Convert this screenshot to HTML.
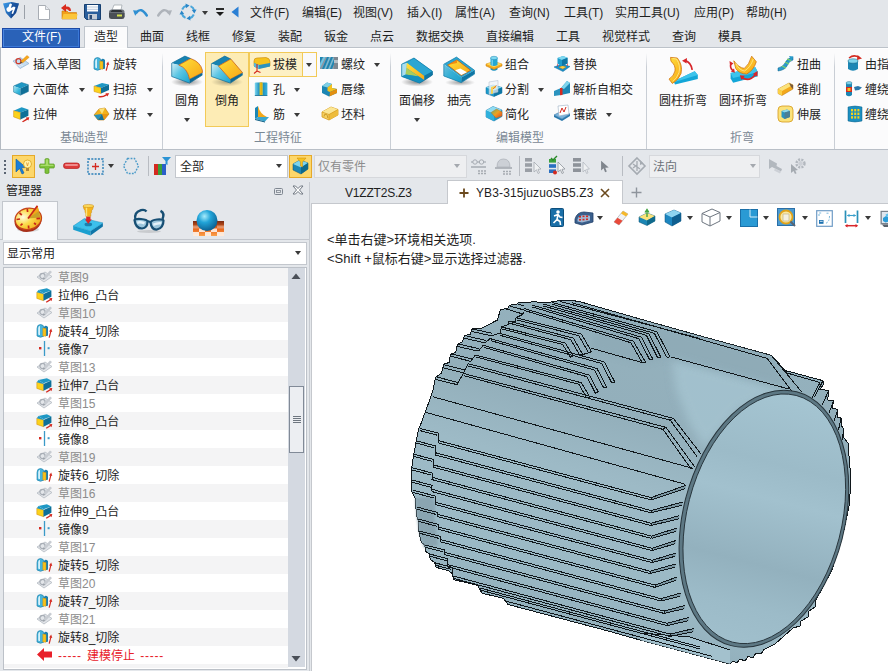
<!DOCTYPE html>
<html lang="zh-CN">
<head>
<meta charset="utf-8">
<title>ZW3D</title>
<style>
html,body{margin:0;padding:0;}
body{width:888px;height:671px;overflow:hidden;position:relative;background:#e4e7eb;
 font-family:"Liberation Sans","Noto Sans CJK SC",sans-serif;font-size:12px;color:#1a1a1a;}
.a{position:absolute;}
.t{position:absolute;white-space:nowrap;font-size:12px;line-height:16px;height:16px;color:#1e1e1e;}
.g{color:#7a8894;}
.dis{color:#8c8c8c;}
.arr{position:absolute;width:0;height:0;border-left:3px solid transparent;border-right:3px solid transparent;border-top:4px solid #3a3a3a;}
.sep{position:absolute;width:1px;background:linear-gradient(to bottom,rgba(201,206,213,0) 0,#c9ced5 14px,#c9ced5 100%);}
svg{position:absolute;overflow:visible;}
/* title bar */
#title{left:0;top:0;width:888px;height:26px;background:#e3e6ea;}
#tabs{left:0;top:26px;width:888px;height:22px;background:#e3e6ea;}
#ribbon{left:0;top:47px;width:888px;height:103px;background:#fbfbfc;box-shadow:inset 0 1px 0 #fff;border-top:1px solid #bcc2c9;border-left:1px solid #b4bac2;border-bottom:1px solid #b9bfc7;box-sizing:border-box;}
#seltb{left:0;top:150px;width:888px;height:32px;background:#e4e7eb;}
#mgr{left:0;top:182px;width:311px;height:489px;background:#e4e7eb;}
#view{left:311px;top:203px;width:577px;height:468px;background:#fff;border-left:1px solid #c5c8cd;border-top:1px solid #c5c8cd;box-sizing:border-box;}
.row{position:absolute;left:4px;width:284px;height:18px;}
.row.o{background:#f4f4f5;}
.row.e{background:#fff;}
.row .t{left:54px;top:2px;}
</style>
</head>
<body>
<div id="title" class="a"></div>
<div id="tabs" class="a"></div>
<div id="ribbon" class="a"></div>
<div id="seltb" class="a"></div>
<div id="mgr" class="a"></div>
<div id="view" class="a"></div>

<!-- ===== title icons ===== -->
<svg style="left:2px;top:1px" width="18" height="18" viewBox="0 0 18 18">
 <defs><linearGradient id="ap" x1="0" y1="0" x2="1" y2="1"><stop offset="0" stop-color="#3a9ae8"/><stop offset="1" stop-color="#123f8c"/></linearGradient></defs>
 <path d="M1 2.500 L9 1 L17 2.500 L14 12 L9 17.500 L4 12Z" fill="url(#ap)"/>
 <path d="M9 1 L17 2.500 L14 12 L9 17.500Z" fill="#0e3478" opacity=".45"/>
 <path d="M4.500 9 Q4 6.500 6.500 6 L7.500 3 Q9 1.800 10 3.500 L8.800 7 L12 5.500 L13.500 6.500 L11 13 L9.500 12.500 L10.800 8.800 L7 11 Q5 11 4.500 9Z" fill="#fff"/>
</svg>
<div class="a" style="left:24px;top:5px;width:1px;height:14px;background:#9aa0a8;"></div>
<svg style="left:38px;top:5px" width="12" height="15" viewBox="0 0 12 15">
 <path d="M.5 .5 L7.5 .5 L11.5 4.5 L11.5 14.5 L.5 14.5Z" fill="#fff" stroke="#a8adb4" stroke-width="1"/>
 <path d="M7.5 .5 L7.5 4.5 L11.5 4.5" fill="#e6e9ee" stroke="#a8adb4" stroke-width=".8"/>
</svg>
<svg style="left:60px;top:3px" width="18" height="17" viewBox="0 0 18 17">
 <path d="M2 8 L7 8 L8.5 9.5 L16.5 9.5 L16.5 16 L2 16Z" fill="#f2a01a" stroke="#c8780a" stroke-width=".6"/>
 <path d="M3.5 11 L17.5 11 L16.5 16 L2 16Z" fill="#fbc63a"/>
 <path d="M11 8 Q11 3 6 3.5 L6 1 L1 5 L6 9 L6 6.3 Q8.5 6 9 8Z" fill="#d92a1c"/>
</svg>
<svg style="left:84px;top:4px" width="17" height="16" viewBox="0 0 17 16">
 <path d="M.5 .5 L16.5 .5 L16.5 15.5 L2.5 15.5 L.5 13.5Z" fill="#2a5f9c" stroke="#173f70" stroke-width="1"/>
 <rect x="3" y="1" width="11" height="6.5" fill="#fff"/><rect x="3" y="2.5" width="11" height="1" fill="#b8c8dc"/><rect x="3" y="4.8" width="11" height="1" fill="#b8c8dc"/>
 <rect x="4" y="10" width="9" height="5.5" fill="#c4ccd6"/><rect x="5.5" y="11" width="2.5" height="4" fill="#2a4a74"/>
</svg>
<svg style="left:108px;top:4px" width="17" height="16" viewBox="0 0 17 16">
 <path d="M4 6 L6 1 L14 1 L13 6Z" fill="#fff" stroke="#9aa0a8" stroke-width=".7"/>
 <path d="M1 8 Q1 5.5 4 5.5 L14 5.5 Q16.5 5.5 16.5 8 L16.5 13 L1 13Z" fill="#6a7078"/>
 <path d="M1 9 L16.5 9 L16.5 13 Q16.5 15 14 15 L3.5 15 Q1 15 1 13Z" fill="#4a4f56"/>
 <rect x="9" y="10.5" width="5" height="2" fill="#d4e04a"/>
 <path d="M4 6 L13 6 L14.5 8 L2.5 8Z" fill="#2e3238"/>
</svg>
<svg style="left:133px;top:7px" width="15" height="10" viewBox="0 0 15 10">
 <path d="M3.500 5.500 Q8 -.5 13.800 8.500" fill="none" stroke="#2f8fd2" stroke-width="2.400" stroke-linecap="round"/><path d="M0 3.200 L6 3.800 L2.200 8.800Z" fill="#2f8fd2"/>
</svg>
<svg style="left:157px;top:7px" width="15" height="10" viewBox="0 0 15 10">
 <path d="M11.500 5.500 Q7 -.5 1.200 8.500" fill="none" stroke="#aeb3ba" stroke-width="2.400" stroke-linecap="round"/><path d="M15 3.200 L9 3.800 L12.800 8.800Z" fill="#aeb3ba"/>
</svg>
<svg style="left:179px;top:3px" width="18" height="18" viewBox="0 0 18 18">
 <g fill="none" stroke="#4aa6da" stroke-width="2">
 <path d="M3.2 6.5 Q4.5 3.5 7.5 2.8"/><path d="M11.5 3.2 Q14.5 4.5 15.2 7.5"/><path d="M14.8 11.5 Q13.5 14.5 10.5 15.2"/><path d="M6.5 14.8 Q3.5 13.5 2.8 10.5"/></g>
 <g fill="#2a86c8"><path d="M6.5 .5 L10.5 2.6 L7 5.2Z"/><path d="M17.5 6.5 L15.4 10.5 L12.8 7Z"/><path d="M11.5 17.5 L7.5 15.4 L11 12.8Z"/><path d="M.5 11.5 L2.6 7.5 L5.2 11Z"/></g>
</svg>
<div class="arr" style="left:202px;top:11px"></div>
<div class="a" style="left:216px;top:8px;width:8px;height:2px;background:#2a2a2a;"></div>
<div class="arr" style="left:216px;top:12px;border-left-width:4px;border-right-width:4px;border-top-color:#1a1a1a"></div>
<svg style="left:231px;top:6px" width="8" height="12" viewBox="0 0 8 12"><path d="M7.5 .5 L7.5 11.5 L.5 6Z" fill="#2a7fd4"/></svg>

<!-- ===== title menu ===== -->
<div class="t" style="left:250px;top:5px;font-size:12px">文件(F)</div>
<div class="t" style="left:302px;top:5px;font-size:12px">编辑(E)</div>
<div class="t" style="left:353px;top:5px;font-size:12px">视图(V)</div>
<div class="t" style="left:407px;top:5px;font-size:12px">插入(I)</div>
<div class="t" style="left:455px;top:5px;font-size:12px">属性(A)</div>
<div class="t" style="left:509px;top:5px;font-size:12px">查询(N)</div>
<div class="t" style="left:564px;top:5px;font-size:12px">工具(T)</div>
<div class="t" style="left:615px;top:5px;font-size:12px">实用工具(U)</div>
<div class="t" style="left:694px;top:5px;font-size:12px">应用(P)</div>
<div class="t" style="left:746px;top:5px;font-size:12px">帮助(H)</div>

<!-- ===== ribbon tabs ===== -->
<div class="a" style="left:2px;top:28px;width:78px;height:20px;background:#2a62b8;border:1px solid #1d4aa5;box-shadow:inset 1px 1px 0 #4a86e0,inset -1px -1px 0 #3a78d8;box-sizing:border-box;"></div>
<div class="t" style="left:22px;top:29px;color:#fff;">文件(F)</div>
<div class="a" style="left:84px;top:26px;width:44px;height:22px;background:#fbfbfc;border:1px solid #bfc5cc;border-bottom:none;box-sizing:border-box;"></div>
<div class="t" style="left:94px;top:29px;">造型</div>
<div class="t" style="left:140px;top:29px;">曲面</div>
<div class="t" style="left:186px;top:29px;">线框</div>
<div class="t" style="left:232px;top:29px;">修复</div>
<div class="t" style="left:278px;top:29px;">装配</div>
<div class="t" style="left:324px;top:29px;">钣金</div>
<div class="t" style="left:370px;top:29px;">点云</div>
<div class="t" style="left:416px;top:29px;">数据交换</div>
<div class="t" style="left:486px;top:29px;">直接编辑</div>
<div class="t" style="left:556px;top:29px;">工具</div>
<div class="t" style="left:602px;top:29px;">视觉样式</div>
<div class="t" style="left:672px;top:29px;">查询</div>
<div class="t" style="left:718px;top:29px;">模具</div>

<!-- ===== ribbon group 1 : 基础造型 ===== -->
<svg style="left:13px;top:55px" width="17" height="16" viewBox="0 0 17 16">
 <path d="M0 6 L7.400 2.500 L16 8.500 L7 13.500Z" fill="#c4dcf0" stroke="#8fb0d0" stroke-width=".7"/>
 <path d="M1.500 8 L8 12 M3 6.500 L10 11" stroke="#e4eef8" stroke-width=".8"/>
 <circle cx="5.500" cy="6.200" r="2.500" fill="none" stroke="#d03a2a" stroke-width="1.300"/>
 <path d="M7.800 6.200 L14 .5 L16.200 2.300 L9.500 8Z" fill="#f8a81a" stroke="#d0780a" stroke-width=".4"/><path d="M7.800 6.200 L9.500 8 L6.800 8.600Z" fill="#5a4a3a"/>
</svg>
<div class="t" style="left:33px;top:57px;">插入草图</div>
<svg style="left:93px;top:55px" width="17" height="17" viewBox="0 0 17 17"><use href="#i-rv"/></svg>
<div class="t" style="left:113px;top:57px;">旋转</div>

<svg style="left:13px;top:81px" width="17" height="16" viewBox="0 0 17 16">
 <defs><linearGradient id="bxl" x1="0" y1="0" x2="1" y2="1"><stop offset="0" stop-color="#b4e8f4"/><stop offset=".6" stop-color="#3cbadc"/><stop offset="1" stop-color="#1c9cc8"/></linearGradient></defs>
 <path d="M.6 5 L8.600 1.500 L15.400 3.700 L7.400 7.400Z" fill="#1f98c4"/>
 <path d="M.6 5 L7.400 7.400 L7.400 14.200 L.6 11.100Z" fill="url(#bxl)"/>
 <path d="M7.400 7.400 L15.400 3.700 L15.400 10.500 L7.400 14.200Z" fill="#0f7098"/>
 <path d="M.6 5 L8.600 1.500 L15.400 3.700 L15.400 10.500 L7.400 14.200 L.6 11.100Z" fill="none" stroke="#0e6a90" stroke-width=".5"/>
</svg>
<div class="t" style="left:33px;top:82px;">六面体</div>
<div class="arr" style="left:79px;top:88px"></div>
<svg style="left:93px;top:81px" width="17" height="17" viewBox="0 0 17 17">
 <path d="M1 5 L9 2 L16 3.500 L8 7Z" fill="#1f98c4"/>
 <path d="M1 5 L8 7 L8 12.500 L1 10.500Z" fill="#fbd21c" stroke="#d08a10" stroke-width=".5"/>
 <path d="M8 7 L16 3.500 L16 9 L8 12.500Z" fill="#0f7098"/>
 <path d="M5.500 14.800 Q9 15.800 13 13.200 L12.400 12.200 L16.200 12.200 L14.400 15.600 L13.800 14.500 Q9.500 17.200 5.500 16.200Z" fill="#d42a20"/>
</svg>
<div class="t" style="left:113px;top:82px;">扫掠</div>
<div class="arr" style="left:147px;top:88px"></div>

<svg style="left:13px;top:106px" width="17" height="17" viewBox="0 0 17 17">
 <path d="M.6 4.700 L8.600 1.200 L15.400 3.500 L7.400 6.600Z" fill="#1f98c4"/>
 <path d="M.6 4.700 L7.400 6.600 L7.400 13.400 L.6 10.900Z" fill="#fbd21c" stroke="#d08a10" stroke-width=".5"/>
 <path d="M7.400 6.600 L15.400 3.500 L15.400 9.700 L7.400 13.400Z" fill="#0f7098"/>
 <path d="M9 15.400 L13.500 12.600 L12.800 11.600 L16.300 11.200 L15.400 14.600 L14.500 13.700 L10 16.300Z" fill="#d42a20"/>
</svg>
<div class="t" style="left:33px;top:107px;">拉伸</div>
<svg style="left:93px;top:106px" width="17" height="16" viewBox="0 0 17 16">
 <path d="M1 9 L6 3 L12 2 L16 8 L11 14 L5 14 Z" fill="#f3b21a" stroke="#b9770c" stroke-width=".6"/>
 <path d="M6 3 L9 8 L12 2 Z" fill="#fbe27a"/><path d="M9 8 L16 8 L11 14Z" fill="#e89512"/>
 <path d="M1 9 L9 8 L5 14Z" fill="#2590bd"/><path d="M9 8 L11 14 L5 14Z" fill="#166f96"/>
</svg>
<div class="t" style="left:113px;top:107px;">放样</div>
<div class="arr" style="left:147px;top:113px"></div>
<div class="t g" style="left:60px;top:130px;">基础造型</div>
<div class="sep" style="left:162px;top:53px;height:96px"></div>

<!-- ===== ribbon group 2 : 工程特征 ===== -->
<svg style="left:170px;top:54px" width="34" height="34" viewBox="0 0 34 34">
 <defs><linearGradient id="bl1" x1="0" y1="0" x2="0" y2="1"><stop offset="0" stop-color="#3db4da"/><stop offset="1" stop-color="#0e6c94"/></linearGradient>
 <linearGradient id="yl1" x1="0" y1="0" x2="1" y2="1"><stop offset="0" stop-color="#ffe03a"/><stop offset="1" stop-color="#f7a516"/></linearGradient>
 <linearGradient id="lf1" x1="0" y1="0" x2="1" y2="1"><stop offset="0" stop-color="#d6eef6"/><stop offset=".45" stop-color="#5cc6e4"/><stop offset="1" stop-color="#1aa4d0"/></linearGradient>
 <radialGradient id="sh1" cx=".5" cy=".5" r=".5"><stop offset="0" stop-color="#000" stop-opacity=".45"/><stop offset="1" stop-color="#000" stop-opacity="0"/></radialGradient></defs>
 <ellipse cx="17" cy="28" rx="16" ry="4.500" fill="url(#sh1)"/>
 <path d="M1.700 9.200 L14.900 2.100 L20.600 4.500 L8.800 11.100Z" fill="#1683b2"/>
 <path d="M1.700 9.200 L8.800 11.100 Q17.500 14 19.600 25.300 L19.600 29.100 L1.700 22.500Z" fill="url(#lf1)"/>
 <path d="M8.800 11.100 L20.600 4.500 Q30.500 8 32.400 16.300 L32.400 18.700 L19.600 25.300 Q17.500 14 8.800 11.100Z" fill="url(#yl1)" stroke="#c2520e" stroke-width=".7"/>
 <path d="M19.600 25.300 L32.400 18.700 L32.400 21 L19.600 29.100Z" fill="#0e6a96"/>
 <path d="M1.700 9.200 L14.900 2.100 L20.600 4.500 M1.700 9.200 L1.700 22.500 L19.600 29.100 L32.400 21" fill="none" stroke="#0e6a96" stroke-width=".7"/>
</svg>
<div class="t" style="left:175px;top:93px;">圆角</div>
<div class="arr" style="left:184px;top:118px"></div>

<div class="a" style="left:205px;top:52px;width:44px;height:75px;background:#fdecb5;border:1px solid #f2ca58;box-sizing:border-box;"></div>
<svg style="left:210px;top:54px" width="34" height="34" viewBox="0 0 34 34">
 <ellipse cx="17" cy="28" rx="16" ry="4.500" fill="url(#sh1)" opacity=".7"/>
 <path d="M1.400 9.700 L14.700 2.100 L20.800 5 L8.500 12.100Z" fill="#1683b2"/>
 <path d="M1.400 9.700 L8.500 12.100 L20.300 25.300 L20.300 29.100 L1.400 22.500Z" fill="url(#lf1)"/>
 <path d="M8.500 12.100 L20.800 5 L32.600 18.700 L20.300 25.300Z" fill="url(#yl1)" stroke="#c2520e" stroke-width=".7"/>
 <path d="M20.300 25.300 L32.600 18.700 L32.600 21 L20.300 29.100Z" fill="#0e6a96"/>
 <path d="M1.400 9.700 L14.700 2.100 L20.800 5 M1.400 9.700 L1.400 22.500 L20.300 29.100 L32.600 21" fill="none" stroke="#0e6a96" stroke-width=".7"/>
</svg>
<div class="t" style="left:215px;top:93px;">倒角</div>

<div class="a" style="left:249px;top:52px;width:68px;height:25px;background:#fdf0c4;border:1px solid #f2ca58;box-sizing:border-box;"></div>
<div class="a" style="left:302px;top:53px;width:1px;height:23px;background:#f2ca58;"></div>
<div class="a" style="left:303px;top:53px;width:13px;height:23px;background:#f9f9fb;"></div>
<svg style="left:252px;top:56px" width="19" height="18" viewBox="0 0 19 18">
 <path d="M2 5 Q2 2 5 2 L14 1.5 Q18 2 18 6 L18 10 L7 12 L2 10 Z" fill="#f6c21c" stroke="#c8860c" stroke-width=".6"/>
 <path d="M2 7 L7 9 L18 7 L18 10.5 L7 13 L2 10.5 Z" fill="#2a93bf"/>
 <path d="M7 9 L7 13 L2 10.5 L2 7Z" fill="#56b9dc"/>
 <path d="M5 8 L5 15 M5 15 L2 17.5 M5 15 L8.5 16.5" stroke="#d42a20" stroke-width="1.1" fill="none"/>
</svg>
<div class="t" style="left:273px;top:57px;">拔模</div>
<div class="arr" style="left:306px;top:63px"></div>

<svg style="left:254px;top:81px" width="15" height="16" viewBox="0 0 15 16">
 <defs><linearGradient id="hl" x1="0" y1="0" x2="1" y2="0"><stop offset="0" stop-color="#7fd8f0"/><stop offset=".35" stop-color="#1c90c0"/><stop offset=".65" stop-color="#1c90c0"/><stop offset="1" stop-color="#3cb4dc"/></linearGradient></defs>
 <rect x=".8" y="1.500" width="12.600" height="13" rx="1" fill="url(#hl)"/>
 <rect x="5.600" y="1.500" width="3" height="13" fill="#fbd21c"/><rect x="6.600" y="1.500" width="1" height="13" fill="#d09a10"/>
 <path d="M.8 14.500 L13.400 14.500" stroke="#0e6a90" stroke-width=".8"/>
</svg>
<div class="t" style="left:273px;top:82px;">孔</div>
<div class="arr" style="left:294px;top:88px"></div>
<svg style="left:254px;top:105px" width="16" height="18" viewBox="0 0 16 18">
 <path d="M1 3 L4 1 L4 12 L1 14 Z" fill="#1c86b4"/>
 <path d="M4 1 L4 12 L13 12 Q6 9 4 1Z" fill="#f3a81a"/>
 <path d="M1 14 L4 12 L15 12 L11 16.5 Z" fill="#3aa6cf"/><path d="M1 14 L11 16.5 L11 17.5 L1 15Z" fill="#0f5f84"/>
</svg>
<div class="t" style="left:273px;top:107px;">筋</div>
<div class="arr" style="left:294px;top:113px"></div>

<svg style="left:320px;top:56px" width="18" height="14" viewBox="0 0 18 14">
 <rect x="0" y="1" width="18" height="12" fill="#8a98a6"/>
 <path d="M0 1 L3 1 L0 7Z M2 13 L7 1 L9 1 L4 13Z M6 13 L11 1 L13 1 L8 13Z M10 13 L14 3 L14 8 L12 13Z" fill="#1c86b4"/>
 <path d="M0 8 L3.5 1 L5.5 1 L0 12Z M4.5 13 L9.5 1 L10.5 1 L5.5 13Z M8.5 13 L13 2 L14 2 L9.5 13Z" fill="#6cc7e6"/>
 <rect x="14" y="1" width="4" height="12" fill="#7d8791"/><rect x="14" y="4" width="4" height="3" fill="#b8c0c8"/>
</svg>
<div class="t" style="left:341px;top:57px;">螺纹</div>
<div class="arr" style="left:374px;top:63px"></div>
<svg style="left:321px;top:81px" width="17" height="16" viewBox="0 0 17 16">
 <path d="M1 5 L6 1.5 L11 3 L11 7 L16 8 L16 12 L8 15.5 L1 12 Z" fill="#1c86b4"/>
 <path d="M1 5 L6 1.5 L11 3 L6.5 6.5 Z" fill="#7fd0e6"/>
 <path d="M6.5 6.5 L11 3 L11 7 L16 8 L9 11 L6.5 10Z" fill="#f6c21c"/>
 <path d="M9 11 L16 8 L16 12 L8.5 15.5Z" fill="#e28f10"/>
</svg>
<div class="t" style="left:341px;top:82px;">唇缘</div>
<svg style="left:321px;top:106px" width="18" height="15" viewBox="0 0 18 15">
 <path d="M1 6 L10 1 L17 3.500 L17 9 L8 14 L1 11Z" fill="#f6d060" stroke="#d69a1c" stroke-width=".8"/>
 <path d="M1 6 L10 1 L17 3.500 L8 8.500Z" fill="#fbe694"/>
 <path d="M8 8.500 L17 3.500 L17 9 L8 14Z" fill="#eebc3c"/>
 <path d="M1 6 L8 8.500 L17 3.500 M8 8.500 L8 14" stroke="#d69a1c" stroke-width=".7" fill="none"/>
 <path d="M3 10.500 Q3 7.800 5 8.300 Q6.800 8.800 6.800 12" stroke="#b88412" stroke-width=".7" fill="none"/>
</svg>
<div class="t" style="left:341px;top:107px;">坯料</div>
<div class="t g" style="left:254px;top:130px;">工程特征</div>
<div class="sep" style="left:390px;top:53px;height:96px"></div>

<!-- ===== ribbon group 3 : 编辑模型 ===== -->
<svg style="left:400px;top:54px" width="34" height="34" viewBox="0 0 34 34">
 <ellipse cx="17" cy="28" rx="16" ry="4.500" fill="url(#sh1)"/>
 <path d="M1.700 10.200 L14 4 L32.400 17.300 L32.400 21 L19.600 29.100 L1.700 22.500Z" fill="#1a9cc8"/>
 <path d="M14 4 L32.400 17.300 L24.400 21.800 L7.400 8.800Z" fill="#2ba6d2"/>
 <path d="M1.700 10.200 L7 8.800 L6.400 20.600 L1.700 22.500Z" fill="#a9def0"/>
 <path d="M6.900 8.800 L24.400 22 L24.400 26.300 L6.400 14Z" fill="url(#yl1)"/>
 <path d="M6.400 14 L18.700 22.500 L5.500 20.600Z" fill="#a8cc5c"/>
 <path d="M1.700 22.500 L5.500 20.600 L18.700 22.500 L24.400 26.300 L19.600 29.100Z" fill="#1690be"/>
 <path d="M24.400 21.800 L32.400 17.300 L32.400 21 L24.400 26.300Z" fill="#0f76a4"/>
 <path d="M19.600 29.100 L24.400 26.300 L32.400 21 L32.400 17.300" fill="none" stroke="#0e6a96" stroke-width=".7"/>
 <path d="M1.700 10.200 L14 4 L32.400 17.300 M1.700 10.200 L1.700 22.500 L19.600 29.100" fill="none" stroke="#0e7aa8" stroke-width=".7"/>
</svg>
<div class="t" style="left:399px;top:93px;">面偏移</div>
<div class="arr" style="left:414px;top:118px"></div>
<svg style="left:443px;top:54px" width="34" height="34" viewBox="0 0 34 34">
 <ellipse cx="17" cy="28.500" rx="15" ry="3.500" fill="url(#sh1)" opacity=".8"/>
 <path d="M.8 10.200 L13.500 3.100 L31.500 16.300 L18.300 23.400Z" fill="#2ba6d2"/>
 <path d="M.8 10.200 L18.300 23.400 L18.300 28.600 L.8 22Z" fill="url(#lf1)"/>
 <path d="M.8 10.200 L18.300 23.400 L18.300 28.600 L.8 22Z" fill="#1a9cc8" opacity=".55"/>
 <path d="M18.300 23.400 L31.500 16.300 L31.500 20.100 L18.300 28.600Z" fill="#0f76a4"/>
 <path d="M4.600 11.100 L14 5.900 L27.700 16.300 L18.300 21.500Z" fill="url(#yl1)" stroke="#c2520e" stroke-width=".7"/>
 <path d="M14 5.900 L14 9 L4.600 11.100Z" fill="#f08c10"/>
 <path d="M12.100 16.300 L17.300 14.400 L24 18.200 L18.300 21.100Z" fill="#fff"/>
 <path d="M.8 10.200 L13.500 3.100 L31.500 16.300 L31.500 20.100 L18.300 28.600 L.8 22Z" fill="none" stroke="#0e7aa8" stroke-width=".7"/>
</svg>
<div class="t" style="left:447px;top:93px;">抽壳</div>

<svg style="left:485px;top:55px" width="18" height="17" viewBox="0 0 18 17">
 <path d="M5.500 11 L5.500 14.500 Q9 17 12.500 14.500 L12.500 11Z" fill="#1590c0"/>
 <path d="M1 9 L9 6.500 L17 9 L17 11 L9 14.500 L1 11Z" fill="#f3a81a" stroke="#c8780a" stroke-width=".5"/>
 <path d="M1 9 L9 6.500 L17 9 L9 12.300Z" fill="#fdd65a"/>
 <path d="M5.500 3 L5.500 10 Q9 12 12.500 10 L12.500 3Z" fill="#22a8d4"/>
 <path d="M6.500 3.500 L6.500 10.300 Q7.500 10.800 8 10.800 L8 4Z" fill="#8fdcf2" opacity=".7"/>
 <ellipse cx="9" cy="3" rx="3.500" ry="1.700" fill="#7fd8f0" stroke="#1a86b4" stroke-width=".5"/>
</svg>
<div class="t" style="left:505px;top:57px;">组合</div>
<svg style="left:485px;top:80px" width="18" height="17" viewBox="0 0 18 17">
 <path d="M1 7.500 L8 5 L17 7.500 L17 13 L9 16.500 L1 13.500Z" fill="#1c9ccc" stroke="#0e6a9c" stroke-width=".5"/>
 <path d="M1 7.500 L8 5 L17 7.500 L9 10.500Z" fill="#7fd8f0"/>
 <path d="M9 10.500 L17 7.500 L17 13 L9 16.500Z" fill="#0f76a4"/>
 <path d="M4 2 L13 .5 L13 12 L4 14.500Z" fill="#eef4f9" fill-opacity=".7" stroke="#a8b8c8" stroke-width=".5"/>
 <path d="M6 7 L11 5.500 L11 8 L8 9 L8 13.500 L6 14Z" fill="#fbd045" opacity=".9"/>
 <path d="M8 9 L11.500 5.500" stroke="#e8602a" stroke-width=".8"/>
</svg>
<div class="t" style="left:505px;top:82px;">分割</div>
<div class="arr" style="left:538px;top:88px"></div>
<svg style="left:485px;top:105px" width="18" height="17" viewBox="0 0 18 17">
 <defs><linearGradient id="smp" x1="0" y1="0" x2="1" y2="1"><stop offset="0" stop-color="#58b56a"/><stop offset=".5" stop-color="#f0a020"/><stop offset="1" stop-color="#d8402a"/></linearGradient></defs>
 <path d="M1 5.500 L8 1.500 L17 5 L17 11.500 L9 16 L1 12Z" fill="#1c9ccc" stroke="#0e6a9c" stroke-width=".5"/>
 <path d="M1 5.500 L8 1.500 L17 5 L9 9Z" fill="#8fdcf2"/>
 <path d="M1 5.500 L9 9 L9 16 L1 12Z" fill="#2fb0dc"/>
 <path d="M6 7.600 L11.500 4 L17 7 L17 11 L11 13Z" fill="url(#smp)" stroke="#b8601a" stroke-width=".4"/>
</svg>
<div class="t" style="left:505px;top:107px;">简化</div>

<svg style="left:553px;top:55px" width="18" height="17" viewBox="0 0 18 17">
 <path d="M1 12 L9 9 L17 11.500 L10 16.500Z" fill="#1a90c8" stroke="#0e6a9c" stroke-width=".5"/>
 <path d="M6 12.200 L9.500 10.800 L13 12 L9.800 14Z" fill="#fbd045" stroke="#c8780a" stroke-width=".4"/>
 <path d="M4.500 3 L10 1 L14.500 2.800 L14.500 8.500 L9 11 L4.500 8.800Z" fill="#1c9ccc"/>
 <path d="M4.500 3 L10 1 L14.500 2.800 L9 5Z" fill="#7fd8f0"/><path d="M9 5 L14.500 2.800 L14.500 8.500 L9 11Z" fill="#0f76a4"/>
 <path d="M4.500 8.800 L4.500 11.500 M14.500 8.500 L14.500 11" stroke="#d8262a" stroke-width=".6"/>
</svg>
<div class="t" style="left:573px;top:57px;">替换</div>
<svg style="left:553px;top:80px" width="18" height="17" viewBox="0 0 18 17">
 <path d="M1 11 L8 8 L8 15 L1 16Z" fill="#2a93bf"/>
 <path d="M8 8 L14 1 L17 3 L17 13 L8 15Z" fill="#1c86b4"/>
 <path d="M8 8 L14 1 L17 3 L11 9Z" fill="#7fd4ec"/>
 <path d="M7 8 L9.5 8 L9.5 15 L7 15.3Z" fill="#d42a20"/>
</svg>
<div class="t" style="left:573px;top:82px;">解析自相交</div>
<svg style="left:553px;top:104px" width="18" height="18" viewBox="0 0 18 18">
 <path d="M1 11 L9 7 L17 10 L9 15Z" fill="#7db4dc" stroke="#3a78a8" stroke-width=".6"/>
 <path d="M1 13 L9 17 L17 12 L17 10 L9 15 L1 11Z" fill="#2a78ac"/>
 <path d="M5 2 L15 1 L16 10 L6 12Z" fill="#fff" stroke="#9aaec2" stroke-width=".6"/>
 <path d="M7 9 L9 4 L11 8 L13 3" stroke="#d42a20" stroke-width="1" fill="none"/>
</svg>
<div class="t" style="left:573px;top:107px;">镶嵌</div>
<div class="arr" style="left:606px;top:113px"></div>
<div class="t g" style="left:496px;top:130px;">编辑模型</div>
<div class="sep" style="left:646px;top:53px;height:96px"></div>

<!-- ===== ribbon group 4 : 折弯 ===== -->
<svg style="left:666px;top:55px" width="35" height="30" viewBox="0 0 35 30">
 <path d="M7.600 26.200 L28.700 16.300 L31.800 20 L31.800 24.100 L9 29.500Z" fill="#12a6d8"/>
 <path d="M7.600 26.200 L28.700 16.300 L31.800 20 L9.500 26.800Z" fill="#3cc4ec"/>
 <path d="M4.500 2.400 L11.300 3 Q17 10 15 18.500 Q12.500 25 6.400 28.500 L3 24.100 Q8 21 9 16 Q9.800 10 5 6.400Z" fill="url(#yl1)" stroke="#d2740e" stroke-width=".8"/>
 <path d="M6.500 3.500 L10.500 4 Q14.800 10.500 13 17.500 Q11 23.500 6.600 26.500" fill="none" stroke="#fff0a0" stroke-width="1" opacity=".7"/>
 <path d="M26.200 14.800 Q25 7.500 19.500 5.600" fill="none" stroke="#d8262a" stroke-width="1.700"/><path d="M16 5.800 L21 3 L20.500 8.600Z" fill="#d8262a"/>
</svg>
<div class="t" style="left:659px;top:93px;">圆柱折弯</div>
<svg style="left:727px;top:55px" width="33" height="30" viewBox="0 0 33 30">
 <path d="M3.600 17.900 L28.400 12.300 L30.900 17.300 L30.300 21.600 L6.100 27.800 L3.600 23.500Z" fill="#12a6d8"/>
 <path d="M3.600 17.900 L28.400 12.300 L30.900 17.300 L6 23Z" fill="#3cc4ec"/>
 <path d="M6.800 5.800 Q12 13 17.300 13.400 Q22 10 24.700 1.200 L29.300 6.800 Q26.500 15.500 19.700 19 Q12.500 19 8.800 13.600Z" fill="url(#yl1)" stroke="#d2740e" stroke-width=".8"/>
 <path d="M8.800 8.500 Q12.500 15.500 17.500 16 Q23.500 12.500 26.300 4" fill="none" stroke="#fff0a0" stroke-width="1" opacity=".7"/>
 <path d="M4 9 Q2.500 12.500 5.800 15.500" fill="none" stroke="#d8262a" stroke-width="1.600"/><path d="M2.500 6 L6.500 8.500 L3 11Z" fill="#d8262a"/><path d="M8 17.800 L3.800 16.500 L7 13.500Z" fill="#d8262a"/>
 <path d="M15 22.500 Q22 27.500 28.500 19.500" fill="none" stroke="#d8262a" stroke-width="1.800"/><path d="M12.800 20.300 L17.800 20.800 L14.500 25Z" fill="#d8262a"/><path d="M30.500 16 L30.500 21.500 L25.800 19Z" fill="#d8262a"/>
</svg>
<div class="t" style="left:719px;top:93px;">圆环折弯</div>

<svg style="left:777px;top:55px" width="17" height="17" viewBox="0 0 17 17">
 <path d="M1 13 Q6 12 8 8 Q10 3 16 2 L16 5 Q12 6 10.5 10 Q8.5 15 1 16Z" fill="#2a9ccc" stroke="#0b5f88" stroke-width=".5"/>
 <path d="M5 11 L9 13 M8 7 L12 9 M10 4 L14 5.5" stroke="#7ad06a" stroke-width="1.2"/>
 <path d="M12 1 L16.5 1.5 L14 5Z" fill="#2a9ccc"/>
</svg>
<div class="t" style="left:797px;top:57px;">扭曲</div>
<svg style="left:777px;top:81px" width="17" height="16" viewBox="0 0 17 16">
 <path d="M1 8 L12 2 L16 4 L16 8 L5 14.5 L1 12.5Z" fill="#f3a81a" stroke="#b9770c" stroke-width=".5"/>
 <path d="M1 8 L12 2 L16 4 L5 10Z" fill="#fbe27a"/>
 <path d="M1 8 L5 10 L5 14.5 L1 12.5Z" fill="#fbd045"/>
 <path d="M12 2 L16 4 L16 8 L14 6Z" fill="#7a5a3a"/>
</svg>
<div class="t" style="left:797px;top:82px;">锥削</div>
<svg style="left:777px;top:105px" width="17" height="18" viewBox="0 0 17 18">
 <rect x="1" y="1" width="15" height="16" rx="4" fill="#fbe27a" stroke="#d69a1c" stroke-width=".8"/>
 <path d="M4.5 6 L10 4.5 L13 6 L13 12 L7.5 14 L4.5 12Z" fill="#2a93bf"/>
 <path d="M4.5 6 L10 4.5 L13 6 L7.5 7.5Z" fill="#8fd8ec"/><path d="M7.5 7.5 L13 6 L13 12 L7.5 14Z" fill="#4a7f96"/>
</svg>
<div class="t" style="left:797px;top:107px;">伸展</div>
<div class="t g" style="left:730px;top:130px;">折弯</div>
<div class="sep" style="left:834px;top:53px;height:96px"></div>

<!-- ===== ribbon group 5 ===== -->
<svg style="left:846px;top:54px" width="17" height="18" viewBox="0 0 17 18">
 <path d="M2 7 L2 15 Q7 18.5 12 15 L12 7Z" fill="#1c86b4"/>
 <ellipse cx="7" cy="7" rx="5" ry="2.2" fill="#7fd4ec" stroke="#14607f" stroke-width=".5"/>
 <path d="M3 4 Q8 0 13 3.5" fill="none" stroke="#d42a20" stroke-width="1.5"/><path d="M11.5 1 L16 4.5 L11 6Z" fill="#d42a20"/>
</svg>
<div class="t" style="left:865px;top:57px;">由指定</div>
<svg style="left:845px;top:80px" width="18" height="18" viewBox="0 0 18 18">
 <path d="M1 3 L1 15 Q4 17.5 7 15 L7 3Z" fill="#1c86b4"/><ellipse cx="4" cy="3" rx="3" ry="1.5" fill="#7fd4ec" stroke="#14607f" stroke-width=".4"/>
 <path d="M1 7 L7 7 L7 12 L1 12Z" fill="#d42a20"/><rect x="2.5" y="8" width="3" height="3" fill="#f6c21c"/>
 <path d="M9 7 L13 6 L17 7.5 L14 10 L10 10.5Z" fill="#2a78ac"/>
</svg>
<div class="t" style="left:865px;top:82px;">缠绕到</div>
<svg style="left:847px;top:105px" width="16" height="18" viewBox="0 0 16 18">
 <path d="M1 2 Q8 0 15 2 L15 16 Q8 18 1 16Z" fill="#1c8fc0" stroke="#0b5f88" stroke-width=".5"/>
 <g fill="#f6d21c"><rect x="4" y="4" width="2" height="2.4"/><rect x="7.2" y="4" width="2" height="2.4"/><rect x="10.4" y="4" width="2" height="2.4"/>
 <rect x="4" y="7.6" width="2" height="2.4"/><rect x="7.2" y="7.6" width="2" height="2.4"/><rect x="10.4" y="7.6" width="2" height="2.4"/>
 <rect x="4" y="11.2" width="2" height="2.4"/><rect x="7.2" y="11.2" width="2" height="2.4"/><rect x="10.4" y="11.2" width="2" height="2.4"/></g>
</svg>
<div class="t" style="left:865px;top:107px;">缠绕阵</div>

<!-- ===== selection toolbar ===== -->
<div class="a" style="left:4px;top:160px;width:2px;height:2px;background:#5a6472;box-shadow:0 4px 0 #5a6472,0 8px 0 #5a6472,0 12px 0 #5a6472;"></div>
<div class="a" style="left:12px;top:155px;width:23px;height:23px;background:#fdd76a;border:1px solid #e5a92a;box-sizing:border-box;"></div>
<svg style="left:15px;top:158px" width="18" height="18" viewBox="0 0 18 18">
 <path d="M1 1 L1 14 L4.5 10.5 L7 16 L9 15 L6.5 9.8 L11 9.5Z" fill="#1a7fd8" stroke="#0c5aa8" stroke-width=".6"/>
 <circle cx="12.5" cy="6" r="4" fill="#fff2a8" stroke="#d8a21a" stroke-width=".8"/>
 <rect x="11" y="10" width="3" height="3" fill="#b0883a"/>
 <path d="M11.5 4.5 L12.5 8 L13.5 4.5" stroke="#e08a1a" stroke-width=".7" fill="none"/>
</svg>
<svg style="left:39px;top:158px" width="16" height="16" viewBox="0 0 16 16">
 <path d="M6 1 Q8 0 10 1 L10 6 L15 6 Q16 8 15 10 L10 10 L10 15 Q8 16 6 15 L6 10 L1 10 Q0 8 1 6 L6 6Z" fill="#7cc23a" stroke="#5a9a22" stroke-width=".7"/>
 <path d="M6.8 1.6 L9.2 1.6 L9.2 6.8 L14.4 6.8 L14.4 8 L1.6 8 L1.6 6.8 L6.8 6.8Z" fill="#a8dc6a"/>
</svg>
<svg style="left:63px;top:162px" width="17" height="8" viewBox="0 0 17 8">
 <rect x=".5" y="1" width="16" height="5.5" rx="2.5" fill="#dc3a3a" stroke="#b82020" stroke-width=".7"/><rect x="2" y="2" width="13" height="2" rx="1" fill="#f08a8a"/>
</svg>
<svg style="left:87px;top:158px" width="17" height="17" viewBox="0 0 17 17">
 <rect x="1" y="1" width="15" height="15" fill="none" stroke="#2a7fb8" stroke-width="1.4" stroke-dasharray="2 1.3"/>
 <path d="M8.5 5 L8.5 12 M5 8.5 L12 8.5" stroke="#d42a20" stroke-width="1.3"/>
</svg>
<div class="arr" style="left:108px;top:164px"></div>
<svg style="left:122px;top:157px" width="18" height="18" viewBox="0 0 18 18">
 <path d="M5.5 1.5 L12.5 1.5 L16.5 9 L12.5 16.5 L5.5 16.5 L1.5 9Z" fill="none" stroke="#4a9ac8" stroke-width="1.4" stroke-dasharray="1.8 1.3"/>
</svg>
<div class="a" style="left:148px;top:156px;width:1px;height:20px;background:#b8bcc2;"></div>
<svg style="left:154px;top:156px" width="17" height="19" viewBox="0 0 17 19">
 <rect x="0" y="8" width="4" height="11" fill="#d42a20"/><rect x="4" y="8" width="4" height="11" fill="#3aa03a"/><rect x="8" y="8" width="4" height="11" fill="#2a5fc8"/>
 <path d="M8 1 L17 1 L13.5 5 L13.5 9 L11.5 8 L11.5 5Z" fill="#2a93d4"/>
</svg>
<div class="a" style="left:175px;top:155px;width:113px;height:23px;background:#fff;border:1px solid #c3c7cd;box-sizing:border-box;"></div>
<div class="t" style="left:180px;top:159px;">全部</div>
<div class="arr" style="left:276px;top:164px"></div>
<div class="a" style="left:289px;top:155px;width:23px;height:23px;background:#fdd76a;border:1px solid #e5a92a;box-sizing:border-box;"></div>
<svg style="left:292px;top:157px" width="18" height="18" viewBox="0 0 18 18">
 <path d="M1 7 L8 3 L16 6 L16 12 L9 17 L1 13Z" fill="#1c86b4" stroke="#0b4f70" stroke-width=".5"/>
 <path d="M1 7 L8 3 L16 6 L9 10.5Z" fill="#7fd4ec"/><path d="M9 10.5 L16 6 L16 12 L9 17Z" fill="#0f6a8c"/>
 <path d="M5 1 L14 1 L10.5 5 L10.5 10 L8.5 9 L8.5 5Z" fill="#f6c21c" stroke="#c8860c" stroke-width=".5"/>
</svg>
<div class="a" style="left:314px;top:155px;width:153px;height:23px;background:#eeeff1;border:1px solid #d6d8dc;box-sizing:border-box;"></div>
<div class="t dis" style="left:318px;top:159px;">仅有零件</div>
<div class="arr" style="left:454px;top:164px;border-top-color:#a4a8ae"></div>
<!-- grey icons -->
<svg style="left:470px;top:157px;opacity:.72" width="17" height="18" viewBox="0 0 17 18">
 <path d="M1 5 L16 5" stroke="#8e949c" stroke-width="1.2"/><circle cx="5" cy="5" r="2.2" fill="#e4e7eb" stroke="#8e949c"/><circle cx="11.5" cy="5" r="2.2" fill="#e4e7eb" stroke="#8e949c"/>
 <path d="M1 10 L16 10" stroke="#8e949c" stroke-width="1.5"/><path d="M8 14 L16 14 M8 16.5 L16 16.5" stroke="#8e949c" stroke-width="1.3" stroke-dasharray="2 1"/>
</svg>
<svg style="left:495px;top:157px;opacity:.72" width="17" height="18" viewBox="0 0 17 18">
 <path d="M2 10 Q2 2 8.5 2 Q15 2 15 10Z" fill="#c4c8ce" stroke="#9aa0a8" stroke-width=".8"/>
 <path d="M0 11 L17 11" stroke="#8e949c" stroke-width="1.6"/><path d="M8 14.5 L16 14.5 M8 17 L16 17" stroke="#8e949c" stroke-width="1.3" stroke-dasharray="2 1"/>
</svg>
<div class="a" style="left:519px;top:156px;width:1px;height:20px;background:#b8bcc2;"></div>
<svg style="left:524px;top:157px;opacity:.72" width="18" height="18" viewBox="0 0 18 18">
 <g fill="#7e848c"><rect x="1" y="1" width="7" height="3.6"/><rect x="1" y="6.2" width="7" height="3.6"/><rect x="1" y="11.4" width="7" height="3.6"/></g>
 <path d="M10 5 L10 15 L12.5 12.8 L14 16.5 L15.5 15.8 L14 12.3 L17 12Z" fill="#f4f5f6" stroke="#8e949c" stroke-width=".8"/>
</svg>
<svg style="left:548px;top:156px" width="18" height="19" viewBox="0 0 18 19">
 <rect x="1" y="3" width="7" height="3.6" fill="#3aa03a"/><rect x="1" y="8.2" width="7" height="3.6" fill="#2a6fc0"/><rect x="1" y="13.4" width="7" height="3.6" fill="#2a6fc0"/>
 <path d="M3 2 L5 4 L9 0" stroke="#2a8a2a" stroke-width="1.4" fill="none"/><circle cx="7" cy="16.5" r="2" fill="#d42a20"/>
 <path d="M10 6 L10 16 L12.5 13.8 L14 17.5 L15.5 16.8 L14 13.3 L17 13Z" fill="#f4f5f6" stroke="#8e949c" stroke-width=".8"/>
</svg>
<svg style="left:572px;top:157px;opacity:.72" width="18" height="18" viewBox="0 0 18 18">
 <g fill="#6e747c"><rect x="1" y="1" width="8" height="3.6"/><rect x="1" y="6.2" width="8" height="3.6"/><rect x="1" y="11.4" width="8" height="3.6"/></g>
 <path d="M11 5 L11 15 L13.2 12.8 L14.6 16.5 L16 15.8 L14.6 12.3 L17.4 12Z" fill="#f4f5f6" stroke="#a0a6ae" stroke-width=".8"/>
</svg>
<svg style="left:600px;top:160px;opacity:.85" width="10" height="13" viewBox="0 0 11 15">
 <path d="M1 1 L1 12 L3.8 9.5 L5.6 14 L7.6 13.2 L5.8 8.9 L9.8 8.6Z" fill="#6e747c"/>
</svg>
<div class="a" style="left:622px;top:156px;width:1px;height:20px;background:#b8bcc2;"></div>
<svg style="left:628px;top:157px;opacity:.72" width="18" height="18" viewBox="0 0 18 18">
 <path d="M9 1 L17 9 L9 17 L1 9Z" fill="none" stroke="#8e949c" stroke-width="1.6"/>
 <path d="M9 4 L9 14 M5 7 L12 12 M5 11 L9 8" stroke="#8e949c" stroke-width="1.3"/><path d="M12 3 L15.5 6.5 L12 8Z" fill="#8e949c"/>
</svg>
<div class="a" style="left:649px;top:155px;width:111px;height:23px;background:#eeeff1;border:1px solid #d6d8dc;box-sizing:border-box;"></div>
<div class="t" style="left:653px;top:159px;color:#6c7178">法向</div>
<div class="arr" style="left:750px;top:164px;border-top-color:#a4a8ae"></div>
<svg style="left:768px;top:158px;opacity:.72" width="15" height="16" viewBox="0 0 15 16">
 <path d="M1 1 L1 11 L4 9 L7 10.5 L13 13.5 L14 11 L8.5 8 L9 5.5Z" fill="#a0a6ae"/><path d="M7 10.5 L13 13.5 L12 15.5 L6 12.5Z" fill="#c4c8ce"/>
</svg>
<svg style="left:790px;top:157px;opacity:.72" width="17" height="17" viewBox="0 0 17 17">
 <circle cx="10.5" cy="6.5" r="4" fill="none" stroke="#a0a6ae" stroke-width="2.4" stroke-dasharray="2 1.2"/><circle cx="10.5" cy="6.5" r="2.4" fill="#c4c8ce"/>
 <path d="M1 7 L1 16 L3.5 14 L5 17 L6.6 16.3 L5.2 13.4 L8 13Z" fill="#8e949c"/>
</svg>

<!-- ===== manager panel ===== -->
<svg width="0" height="0" style="position:absolute"><defs>
 <g id="i-sk"><path d="M1 9 L9 4 L16 8.5 L8 14 Z" fill="#e3e6ea" stroke="#b4bac2" stroke-width=".8"/><circle cx="6.5" cy="8" r="2.6" fill="none" stroke="#a8aeb6" stroke-width="1.2"/><path d="M7.5 9.5 L14 2.5 L16 4 L9.5 11 Z" fill="#c8ccd2"/><path d="M7.5 9.5 L9.5 11 L6.8 11.8Z" fill="#9aa0a8"/></g>
 <g id="i-ex"><path d="M2.400 4 L10.900 2.300 L15.400 4.500 L7.500 7.300Z" fill="#1f98c4"/><path d="M.8 6.200 L7.500 7.900 L7.500 14.700 L.8 12.400Z" fill="#fbd21c" stroke="#d08a10" stroke-width=".5"/><path d="M7.500 7.900 L15.400 4.500 L15.400 10.700 L7.500 14.700Z" fill="#0f7098"/><path d="M2.400 4 L.8 6.200 L7.500 7.900 L7.500 7.300Z" fill="#1f98c4"/><path d="M9.800 15.800 L13.800 13.300 L13.200 12.300 L16.300 12 L15.500 15.200 L14.700 14.300 L10.600 16.700Z" fill="#d42a20"/></g>
 <g id="i-rv"><path d="M1 6.500 Q1 2.500 4.500 2.500 Q8 2.500 8 6.500 L8 14 Q4.500 16.500 1 14 Z" fill="#45b4dc" stroke="#1a7aa4" stroke-width=".6"/><path d="M2.200 6 Q2.500 4 4 3.800 L4 13 Q3 13 2.200 12.500Z" fill="#d4f0fa"/><path d="M8 5 Q9.500 2.500 12 5 L12 13.500 Q10 14.500 8 13.500 Z" fill="#1d7fae"/><path d="M6.800 6 L10 6.500 L10 14.200 L6.800 14 Z" fill="#f6c21c" stroke="#c8860c" stroke-width=".4"/><path d="M12.600 15.500 L14.200 9.500 L13 9.500 L15.200 6.500 L16.300 10 L15.300 9.800 L13.800 15.800Z" fill="#d42a20"/></g>
 <g id="i-mi"><path d="M8.5 1 L8.5 16" stroke="#3a9ac8" stroke-width="1.3"/><rect x="3" y="7" width="2.4" height="2.4" fill="#d42a20"/><rect x="11.6" y="7.2" width="2" height="2" fill="#3a9ac8"/></g>
 <g id="i-st"><path d="M1 8.5 L8 2 L8 5.5 L16 5.5 L16 11.5 L8 11.5 L8 15Z" fill="#e8202a"/></g>
</defs></svg>
<div class="t" style="left:6px;top:183px;">管理器</div>
<svg style="left:274px;top:188px" width="9" height="7" viewBox="0 0 9 7"><rect x=".5" y=".5" width="8" height="6" rx="1" fill="none" stroke="#7e8690" stroke-width="1"/><rect x="2.500" y="2.500" width="4" height="2" fill="none" stroke="#7e8690" stroke-width=".8"/></svg>
<svg style="left:292px;top:185px" width="12" height="10" viewBox="0 0 12 10"><path d="M1 1 L3.5 1 L6 3.5 L8.5 1 L11 1 L7.5 5 L11 9 L8.5 9 L6 6.5 L3.5 9 L1 9 L4.5 5Z" fill="#fff" stroke="#6e7680" stroke-width="1"/></svg>
<div class="a" style="left:0;top:239px;width:309px;height:1px;background:#c3c7cd;"></div>
<div class="a" style="left:2px;top:201px;width:56px;height:39px;background:#f8f9fb;border:1px solid #c3c7cd;border-bottom:none;box-sizing:border-box;"></div>
<!-- tab icon 1: history clock -->
<svg style="left:13px;top:205px" width="31" height="28" viewBox="0 0 31 28">
 <defs><radialGradient id="ck" cx=".32" cy=".38" r=".75"><stop offset="0" stop-color="#fffbe0"/><stop offset=".45" stop-color="#fbdc4a"/><stop offset="1" stop-color="#f0a818"/></radialGradient></defs>
 <ellipse cx="15" cy="24.500" rx="11" ry="2.500" fill="#000" opacity=".13"/>
 <ellipse cx="15" cy="15.800" rx="13.600" ry="11" fill="#a8301a" transform="rotate(-12 15 15.800)"/>
 <ellipse cx="15.300" cy="13.800" rx="13.300" ry="10.600" fill="url(#ck)" stroke="#c4421a" stroke-width="1.300" transform="rotate(-12 15.300 13.800)"/>
 <path d="M15 13.600 L24.500 1 L27.300 12.500Z" fill="#c8a228"/>
 <g stroke="#c8281a" stroke-width="1.700"><path d="M3.500 14.500 L7 14"/><path d="M23.500 13.700 L27 13.400"/><path d="M15.500 20.500 L15.700 23.500"/><path d="M6.500 8 L8.800 10"/><path d="M7.500 20.500 L9.500 18.600"/><path d="M23 19.500 L21 18"/><path d="M14.300 4 L14.600 7"/></g>
 <path d="M15 13.600 L24.500 .8 L26 6Z" fill="#f2a81a"/>
 <path d="M15 13.600 L24.500 .8" stroke="#c8281a" stroke-width="1.700"/>
</svg>
<!-- tab icon 2: CAM -->
<svg style="left:73px;top:204px" width="31" height="32" viewBox="0 0 31 32">
 <path d="M.2 22 L17.500 27 L17.500 31.500 L.2 25.700Z" fill="#1aa0d0"/>
 <path d="M17.500 27 L29.900 18.900 L29.900 22.600 L17.500 31.500Z" fill="#0e76a8"/>
 <path d="M.2 22 L11.300 14.600 L29.900 18.900 L17.500 27Z" fill="#3cc0ec" stroke="#1a90c0" stroke-width=".5"/>
 <ellipse cx="15.300" cy="20.400" rx="3.800" ry="1.900" fill="#1a80b0"/>
 <path d="M13.200 12.500 L17.500 12.500 L17.500 15.500 L18.800 15.500 L15.300 19.800 L11.800 15.500 L13.200 15.500Z" fill="#d8262a"/>
 <path d="M10.100 2 L20.600 2 L19.600 5.500 L18.600 6 L18.600 8.500 L17.800 9 L17.800 12.300 L12.800 12.300 L12.800 9 L12 8.500 L12 6 L11.100 5.500Z" fill="#f6b41a" stroke="#c8860c" stroke-width=".5"/>
 <path d="M13.500 3 L13.500 12" stroke="#fde27a" stroke-width="1.400"/>
 <ellipse cx="15.350" cy="2" rx="5.250" ry="1.600" fill="#fbd85a" stroke="#c8860c" stroke-width=".5"/>
</svg>
<!-- tab icon 3: glasses -->
<svg style="left:132px;top:208px" width="34" height="25" viewBox="0 0 34 25">
 <path d="M3.500 12 Q1.500 4.500 9 2.200 Q12.500 1.200 14.500 3.500" fill="none" stroke="#174f74" stroke-width="2.400"/>
 <path d="M30.500 11 Q33 5 28.500 2.800" fill="none" stroke="#174f74" stroke-width="2.400"/>
 <path d="M2.500 12 Q3.500 10.500 9 11 Q15 11.500 15.500 13.500 Q15.500 20 10 20.500 Q3.500 20.500 2.500 12Z" fill="#9cc6dc" stroke="#174f74" stroke-width="2.200"/>
 <path d="M18.500 14.500 Q19.500 12 25 11.500 Q31 11 31.500 12.500 Q31.500 20 25 21.500 Q19.500 22 18.500 14.500Z" fill="#9cc6dc" stroke="#174f74" stroke-width="2.200"/>
 <path d="M15.500 14 Q17 12.500 18.500 14.500" fill="none" stroke="#174f74" stroke-width="2"/>
 <path d="M5 13.500 Q8 12.500 13 14 L12 16.500 Q8 15 5.500 16Z" fill="#e4f2fa"/><path d="M21 15.500 Q25 13.500 29.500 14 L29 16.500 Q25 16 21.500 18Z" fill="#e4f2fa"/>
 <ellipse cx="17" cy="23.500" rx="12" ry="1.500" fill="#000" opacity=".12"/>
</svg>
<!-- tab icon 4: sphere on checker -->
<svg style="left:192px;top:208px" width="33" height="29" viewBox="0 0 33 29">
 <defs><radialGradient id="sp" cx=".38" cy=".3" r=".75"><stop offset="0" stop-color="#a8ecfc"/><stop offset=".4" stop-color="#22a4d8"/><stop offset="1" stop-color="#0a5a8c"/></radialGradient>
 <linearGradient id="ckb" x1="0" y1="0" x2="0" y2="1"><stop offset="0" stop-color="#7a2a12"/><stop offset=".5" stop-color="#e8641a"/><stop offset="1" stop-color="#fba04a"/></linearGradient></defs>
 <rect x="1" y="13" width="31" height="15" fill="url(#ckb)"/>
 <g fill="#fff" fill-opacity=".8"><rect x="1" y="24" width="6" height="4"/><rect x="13" y="24" width="6" height="4"/><rect x="25" y="24" width="7" height="4"/><rect x="7" y="20.500" width="6" height="3.500"/><rect x="19" y="20.500" width="6" height="3.500"/></g>
 <g fill="#fff" fill-opacity=".35"><rect x="1" y="17.500" width="6" height="3"/><rect x="13" y="17.500" width="6" height="3"/><rect x="25" y="17.500" width="7" height="3"/></g>
 <circle cx="15" cy="12.500" r="10.500" fill="url(#sp)"/>
</svg>
<div class="a" style="left:3px;top:242px;width:304px;height:23px;background:#fff;border:1px solid #c3c7cd;box-sizing:border-box;"></div>
<div class="t" style="left:7px;top:246px;">显示常用</div>
<div class="arr" style="left:295px;top:251px"></div>
<!-- tree -->
<div class="a" style="left:3px;top:267px;width:304px;height:403px;background:#fff;border:1px solid #bcc1c8;box-sizing:border-box;"></div>
<div class="a" style="left:309px;top:182px;width:1px;height:489px;background:#c6cad0;"></div>

<div class="row o" style="top:268px"><svg style="left:32px;top:0px" width="17" height="17" viewBox="0 0 17 17"><use href="#i-sk"/></svg><div class="t" style="color:#8c8c8c;">草图9</div></div>
<div class="row e" style="top:286px"><svg style="left:32px;top:0px" width="17" height="17" viewBox="0 0 17 17"><use href="#i-ex"/></svg><div class="t" style="">拉伸6_凸台</div></div>
<div class="row o" style="top:304px"><svg style="left:32px;top:0px" width="17" height="17" viewBox="0 0 17 17"><use href="#i-sk"/></svg><div class="t" style="color:#8c8c8c;">草图10</div></div>
<div class="row e" style="top:322px"><svg style="left:32px;top:0px" width="17" height="17" viewBox="0 0 17 17"><use href="#i-rv"/></svg><div class="t" style="">旋转4_切除</div></div>
<div class="row o" style="top:340px"><svg style="left:32px;top:0px" width="17" height="17" viewBox="0 0 17 17"><use href="#i-mi"/></svg><div class="t" style="">镜像7</div></div>
<div class="row e" style="top:358px"><svg style="left:32px;top:0px" width="17" height="17" viewBox="0 0 17 17"><use href="#i-sk"/></svg><div class="t" style="color:#8c8c8c;">草图13</div></div>
<div class="row o" style="top:376px"><svg style="left:32px;top:0px" width="17" height="17" viewBox="0 0 17 17"><use href="#i-ex"/></svg><div class="t" style="">拉伸7_凸台</div></div>
<div class="row e" style="top:394px"><svg style="left:32px;top:0px" width="17" height="17" viewBox="0 0 17 17"><use href="#i-sk"/></svg><div class="t" style="color:#8c8c8c;">草图15</div></div>
<div class="row o" style="top:412px"><svg style="left:32px;top:0px" width="17" height="17" viewBox="0 0 17 17"><use href="#i-ex"/></svg><div class="t" style="">拉伸8_凸台</div></div>
<div class="row e" style="top:430px"><svg style="left:32px;top:0px" width="17" height="17" viewBox="0 0 17 17"><use href="#i-mi"/></svg><div class="t" style="">镜像8</div></div>
<div class="row o" style="top:448px"><svg style="left:32px;top:0px" width="17" height="17" viewBox="0 0 17 17"><use href="#i-sk"/></svg><div class="t" style="color:#8c8c8c;">草图19</div></div>
<div class="row e" style="top:466px"><svg style="left:32px;top:0px" width="17" height="17" viewBox="0 0 17 17"><use href="#i-rv"/></svg><div class="t" style="">旋转6_切除</div></div>
<div class="row o" style="top:484px"><svg style="left:32px;top:0px" width="17" height="17" viewBox="0 0 17 17"><use href="#i-sk"/></svg><div class="t" style="color:#8c8c8c;">草图16</div></div>
<div class="row e" style="top:502px"><svg style="left:32px;top:0px" width="17" height="17" viewBox="0 0 17 17"><use href="#i-ex"/></svg><div class="t" style="">拉伸9_凸台</div></div>
<div class="row o" style="top:520px"><svg style="left:32px;top:0px" width="17" height="17" viewBox="0 0 17 17"><use href="#i-mi"/></svg><div class="t" style="">镜像9</div></div>
<div class="row e" style="top:538px"><svg style="left:32px;top:0px" width="17" height="17" viewBox="0 0 17 17"><use href="#i-sk"/></svg><div class="t" style="color:#8c8c8c;">草图17</div></div>
<div class="row o" style="top:556px"><svg style="left:32px;top:0px" width="17" height="17" viewBox="0 0 17 17"><use href="#i-rv"/></svg><div class="t" style="">旋转5_切除</div></div>
<div class="row e" style="top:574px"><svg style="left:32px;top:0px" width="17" height="17" viewBox="0 0 17 17"><use href="#i-sk"/></svg><div class="t" style="color:#8c8c8c;">草图20</div></div>
<div class="row o" style="top:592px"><svg style="left:32px;top:0px" width="17" height="17" viewBox="0 0 17 17"><use href="#i-rv"/></svg><div class="t" style="">旋转7_切除</div></div>
<div class="row e" style="top:610px"><svg style="left:32px;top:0px" width="17" height="17" viewBox="0 0 17 17"><use href="#i-sk"/></svg><div class="t" style="color:#8c8c8c;">草图21</div></div>
<div class="row o" style="top:628px"><svg style="left:32px;top:0px" width="17" height="17" viewBox="0 0 17 17"><use href="#i-rv"/></svg><div class="t" style="">旋转8_切除</div></div>
<div class="row e" style="top:646px"><svg style="left:32px;top:0px" width="17" height="17" viewBox="0 0 17 17"><use href="#i-st"/></svg><div class="t" style="color:#e8202a;"><span style="letter-spacing:.75px;word-spacing:1.2px">----- </span>建模停止<span style="letter-spacing:.75px;word-spacing:1.2px"> -----</span></div></div>
<div class="row o" style="top:664px;height:4px"></div>
<!-- scrollbar -->
<div class="a" style="left:288px;top:268px;width:17px;height:399px;background:#d4d9e1;"></div>
<svg style="left:291px;top:273px" width="10" height="7" viewBox="0 0 10 7"><path d="M5 .5 L9.5 6 L.5 6Z" fill="#4a4f58"/></svg>
<svg style="left:291px;top:655px" width="10" height="7" viewBox="0 0 10 7"><path d="M5 6.500 L9.500 1 L.500 1Z" fill="#4a4f58"/></svg>
<div class="a" style="left:289px;top:386px;width:15px;height:67px;background:#eceef2;border:1px solid #818a97;box-sizing:border-box;"></div>
<div class="a" style="left:293px;top:416px;width:8px;height:1px;background:#6e7680;box-shadow:0 2px 0 #6e7680,0 4px 0 #6e7680,0 6px 0 #6e7680;"></div>

<!-- ===== doc tabs ===== -->
<div class="t" style="left:345px;top:185px;letter-spacing:-.2px">V1ZZT2S.Z3</div>
<div class="a" style="left:447px;top:180px;width:176px;height:24px;background:#fff;border:1px solid #c5c8cd;border-bottom:none;box-sizing:border-box;"></div>
<svg style="left:459px;top:188px" width="10" height="10" viewBox="0 0 10 10"><path d="M5 .5 L5 9.500 M.500 5 L9.500 5" stroke="#6b4a1e" stroke-width="1.800"/></svg>
<div class="t" style="left:476px;top:185px;letter-spacing:.12px">YB3-315juzuoSB5.Z3</div>
<svg style="left:600px;top:188px" width="10" height="10" viewBox="0 0 10 10"><path d="M1 1 L9 9 M9 1 L1 9" stroke="#6b4a1e" stroke-width="1.600"/></svg>
<svg style="left:631px;top:187px" width="11" height="11" viewBox="0 0 11 11"><path d="M5.500 .5 L5.500 10.500 M.500 5.500 L10.500 5.500" stroke="#8e949c" stroke-width="1.400"/></svg>

<!-- ===== view toolbar ===== -->
<svg style="left:550px;top:208px" width="15" height="20" viewBox="0 0 15 20">
 <rect x=".5" y=".5" width="13" height="18" rx="1" fill="#1a6fa8" stroke="#0e4f7c"/>
 <circle cx="8" cy="4" r="1.800" fill="#fff"/><path d="M4 8 L8 6.500 L10 9 L12.500 9.500 M8 6.500 L7 11.500 L3.500 15 M7 11.500 L10 13.500 L10.500 17" stroke="#fff" stroke-width="1.600" fill="none"/>
 <path d="M9 14 L14.500 14 L14.500 20 L9 20Z" fill="#e4e7eb" fill-opacity=".0"/>
</svg>
<svg style="left:574px;top:210px" width="20" height="16" viewBox="0 0 20 16">
 <path d="M1 9 Q3 2 10 2 L19 3 L19 12 L8 15 L1 13Z" fill="#3a5f8c" stroke="#22406a" stroke-width=".8"/>
 <path d="M3.500 9 Q5.500 5 10 5 L16 5.800 L16 10.500 L8 12.500 L3.500 11.500Z" fill="#9fb8d4"/>
 <g fill="#d42a20"><rect x="5" y="6" width="2" height="1.600"/><rect x="8.500" y="5.500" width="2" height="1.600"/><rect x="12" y="5.500" width="2" height="1.600"/><rect x="5" y="9" width="2" height="1.600"/><rect x="8.500" y="8.800" width="2" height="1.600"/><rect x="12" y="8.500" width="2" height="1.600"/></g>
</svg>
<div class="arr" style="left:597px;top:216px"></div>
<svg style="left:613px;top:209px" width="16" height="17" viewBox="0 0 16 17">
 <path d="M1 13 L10 2 L15 5 L6 16Z" fill="#f0f2f4" stroke="#9aa0a8" stroke-width=".6"/>
 <path d="M1 13 L4.500 8.700 L9.500 11.700 L6 16Z" fill="#e84a3a"/><path d="M8 4.500 L10 2 L15 5 L13 7.500Z" fill="#f6b82a"/>
</svg>
<svg style="left:638px;top:208px" width="18" height="18" viewBox="0 0 18 18">
 <path d="M1 9 L9 5 L17 8 L17 13 L9 17.500 L1 14Z" fill="#1c86b4" stroke="#0b4f70" stroke-width=".5"/>
 <path d="M1 9 L9 5 L17 8 L9 12.500Z" fill="#fbe27a"/><path d="M9 12.500 L17 8 L17 13 L9 17.500Z" fill="#0f6a8c"/>
 <path d="M9 9 L9 3 M7 4.500 L9 1.500 L11 4.500" stroke="#3aa03a" stroke-width="1.300" fill="none"/>
</svg>
<svg style="left:664px;top:209px" width="18" height="18" viewBox="0 0 18 18">
 <path d="M1 5 L10 1 L17 4 L17 12 L8 17 L1 13Z" fill="#1c86c0" stroke="#0b4f78" stroke-width=".5"/>
 <path d="M1 5 L10 1 L17 4 L8 8.500Z" fill="#8fd4f0"/><path d="M8 8.500 L17 4 L17 12 L8 17Z" fill="#0f5f90"/>
</svg>
<div class="arr" style="left:687px;top:216px"></div>
<svg style="left:701px;top:208px" width="20" height="19" viewBox="0 0 20 19">
 <path d="M1 5.500 L11 1 L19 4.500 L19 13 L9 18 L1 14Z" fill="#fff" stroke="#6e7680" stroke-width="1"/>
 <path d="M1 5.500 L9 9 L19 4.500 M9 9 L9 18" stroke="#6e7680" stroke-width="1" fill="none"/>
</svg>
<div class="arr" style="left:726px;top:216px"></div>
<svg style="left:740px;top:209px" width="18" height="18" viewBox="0 0 18 18">
 <rect x=".5" y=".5" width="17" height="17" fill="#2a9ad4" stroke="#1a6fa8"/><path d="M10 .5 L10 8 L17.500 8" stroke="#d4ecf8" stroke-width="1" fill="none"/>
</svg>
<div class="arr" style="left:763px;top:216px"></div>
<svg style="left:777px;top:208px" width="19" height="19" viewBox="0 0 19 19">
 <rect x=".5" y=".5" width="17" height="17" fill="#4a9ad0" stroke="#2a6fa8"/>
 <circle cx="9" cy="9" r="6.500" fill="#fbe8a0" stroke="#e0a21a" stroke-width="1.800"/><rect x="6" y="6" width="6" height="7" fill="#f4f0e0" stroke="#b8aa80" stroke-width=".6"/>
 <path d="M13.500 13.500 L18 18" stroke="#5a6472" stroke-width="2"/>
</svg>
<div class="arr" style="left:802px;top:216px"></div>
<svg style="left:816px;top:210px" width="17" height="17" viewBox="0 0 17 17">
 <rect x=".7" y=".7" width="15.600" height="15.600" fill="#fff" stroke="#6f9cc6" stroke-width="1.200"/>
 <path d="M3 6 L3 3 L6 3 M10.500 3.200 L13 3.200 M13.500 6 Q13.500 12.500 9 13.500" fill="none" stroke="#7ab8dc" stroke-width="1" stroke-dasharray="2 1.200"/>
 <rect x="3" y="10" width="4.500" height="3.800" fill="#1a70b0"/><rect x="3.800" y="10.800" width="2.900" height="1" fill="#cfe4f4"/>
</svg>
<svg style="left:844px;top:210px" width="15" height="18" viewBox="0 0 15 18">
 <path d="M1.500 .5 L1.500 13 M13.500 .5 L13.500 13" stroke="#2a90b8" stroke-width="1.700"/><path d="M3.500 5.500 L11.500 5.500" stroke="#3aa0cc" stroke-width="1.100"/>
 <path d="M2.800 5.500 L5.500 4 L5.500 7Z M12.200 5.500 L9.500 4 L9.500 7Z" fill="#3aa0cc"/><path d="M2 15.700 L13 15.700" stroke="#d8262a" stroke-width="1.500"/><path d="M.8 15.700 L3.500 14 L3.500 17.400Z M14.200 15.700 L11.500 14 L11.500 17.400Z" fill="#d8262a"/>
</svg>
<div class="arr" style="left:865px;top:216px"></div>
<svg style="left:880px;top:210px" width="9" height="18" viewBox="0 0 9 18">
 <path d="M.5 .8 L9 .8 L9 14.500 L.5 14.500Z" fill="#7a828c"/><rect x="1.800" y="2" width="7.200" height="11" fill="#dfe6ee"/>
 <path d="M3 8 L6 6 L9 7.500 L9 11.500 L5.500 12.500 L3 11Z" fill="#2a9cd8"/><path d="M5.500 4.500 L9 3 L9 7 L6 6Z" fill="#5cc0ec"/>
 <path d="M2 14.500 L9 14.500 L9 17 L4 17Z" fill="#5a626c"/>
</svg>

<!-- ===== view text ===== -->
<div class="t" style="left:327px;top:232px;font-size:13px;">&lt;单击右键&gt;环境相关选项.</div>
<div class="t" style="left:327px;top:251px;font-size:13px;">&lt;Shift +鼠标右键&gt;显示选择过滤器.</div>
<!-- MODEL-BEGIN -->
<svg style="left:0;top:0" width="888" height="671" viewBox="0 0 888 671">
<defs>
<linearGradient id="mb" gradientUnits="userSpaceOnUse" x1="575" y1="300" x2="490" y2="620">
 <stop offset="0" stop-color="#94b1bd"/><stop offset=".3" stop-color="#93afbb"/><stop offset=".5" stop-color="#9dbac6"/><stop offset=".8" stop-color="#9bb9c5"/><stop offset="1" stop-color="#90adb9"/></linearGradient>
<linearGradient id="mi" gradientUnits="userSpaceOnUse" x1="0" y1="-128" x2="0" y2="128">
 <stop offset="0" stop-color="#a5c5d2"/><stop offset=".28" stop-color="#9cbbc8"/><stop offset=".42" stop-color="#a2c1ce"/><stop offset=".68" stop-color="#93b1be"/><stop offset=".85" stop-color="#9cbbc8"/><stop offset="1" stop-color="#a0bfcc"/></linearGradient>
<filter id="bl" x="-20%" y="-20%" width="140%" height="140%"><feGaussianBlur stdDeviation="5"/></filter><filter id="bl2" x="-20%" y="-20%" width="140%" height="140%"><feGaussianBlur stdDeviation="3"/></filter>
<filter id="bl3" x="-20%" y="-20%" width="140%" height="140%"><feGaussianBlur stdDeviation="1.2"/></filter>
<clipPath id="mc"><path d="M433.0 390.0 L427.5 406.0 L420.8 424.0 L418.5 429.5 L416.3 440.7 L413.6 455.3 L411.8 467.7 L411.3 480.0 L411.8 491.4 L415.0 498.0 L416.7 516.0 L418.0 520.0 L419.0 532.4 L421.3 542.5 L424.6 544.8 L425.8 551.5 L429.0 553.8 L430.3 559.4 L434.8 562.8 L436.0 567.3 L448.3 570.7 L451.7 573.0 L454.0 579.7 L477.6 585.3 L482.0 593.2 L503.5 598.4 L508.0 604.5 L610.0 631.5 L640.0 640.0 L730.0 664.0 L733.0 661.0 L737.0 663.0 L740.0 659.0 L745.0 661.0 L748.0 656.5 L753.0 658.0 L756.0 653.0 L761.0 654.0 L764.0 649.5 L775.0 644.0 L793.0 628.0 L800.0 626.0 L801.0 621.0 L808.0 617.0 L809.0 611.0 L815.0 607.0 L816.0 600.0 L832.0 570.0 L844.0 530.0 L849.0 506.0 L851.0 482.0 L850.0 468.0 L848.0 443.0 L843.8 437.4 L843.8 429.0 L841.0 425.0 L841.0 418.0 L837.0 417.0 L837.7 409.5 L832.4 408.0 L833.7 400.5 L827.6 400.0 L829.0 390.2 L819.9 389.8 L824.0 383.5 L823.0 380.7 L785.4 370.5 L771.2 355.3 L700.0 335.8 L640.0 319.0 L581.0 302.0 L570.0 300.0 L558.6 300.8 L545.0 303.0 L535.0 301.8 L518.3 302.7 L516.8 304.5 L509.3 305.2 L507.8 308.2 L500.4 309.7 L497.4 320.0 L494.4 321.6 L481.0 328.6 L472.0 328.6 L470.6 334.0 L464.6 335.8 L462.4 341.7 L457.5 344.4 L455.7 352.2 L450.5 354.4 L449.0 362.6 L444.0 364.0 L441.5 373.0 L435.5 377.5 L432.6 392.4 Z"/></clipPath>
</defs>
<path d="M433.0 390.0 L427.5 406.0 L420.8 424.0 L418.5 429.5 L416.3 440.7 L413.6 455.3 L411.8 467.7 L411.3 480.0 L411.8 491.4 L415.0 498.0 L416.7 516.0 L418.0 520.0 L419.0 532.4 L421.3 542.5 L424.6 544.8 L425.8 551.5 L429.0 553.8 L430.3 559.4 L434.8 562.8 L436.0 567.3 L448.3 570.7 L451.7 573.0 L454.0 579.7 L477.6 585.3 L482.0 593.2 L503.5 598.4 L508.0 604.5 L610.0 631.5 L640.0 640.0 L730.0 664.0 L733.0 661.0 L737.0 663.0 L740.0 659.0 L745.0 661.0 L748.0 656.5 L753.0 658.0 L756.0 653.0 L761.0 654.0 L764.0 649.5 L775.0 644.0 L793.0 628.0 L800.0 626.0 L801.0 621.0 L808.0 617.0 L809.0 611.0 L815.0 607.0 L816.0 600.0 L832.0 570.0 L844.0 530.0 L849.0 506.0 L851.0 482.0 L850.0 468.0 L848.0 443.0 L843.8 437.4 L843.8 429.0 L841.0 425.0 L841.0 418.0 L837.0 417.0 L837.7 409.5 L832.4 408.0 L833.7 400.5 L827.6 400.0 L829.0 390.2 L819.9 389.8 L824.0 383.5 L823.0 380.7 L785.4 370.5 L771.2 355.3 L700.0 335.8 L640.0 319.0 L581.0 302.0 L570.0 300.0 L558.6 300.8 L545.0 303.0 L535.0 301.8 L518.3 302.7 L516.8 304.5 L509.3 305.2 L507.8 308.2 L500.4 309.7 L497.4 320.0 L494.4 321.6 L481.0 328.6 L472.0 328.6 L470.6 334.0 L464.6 335.8 L462.4 341.7 L457.5 344.4 L455.7 352.2 L450.5 354.4 L449.0 362.6 L444.0 364.0 L441.5 373.0 L435.5 377.5 L432.6 392.4 Z" fill="url(#mb)" stroke="#10171b" stroke-width="1" stroke-linejoin="round" shape-rendering="crispEdges"/>
<g clip-path="url(#mc)"><path d="M672 359 L789 390 L740 408 L705 448 L690 425 L676 390Z" fill="#a6c5d1" opacity=".8" filter="url(#bl)"/><path d="M590 349 L640 363 L670 357.500 L789 390 L771 356 L640 320 L600 312Z" fill="#8aa6b2" opacity=".5" filter="url(#bl2)"/></g>
<path d="M415 498 L432 497 L435.4 502.6 L434.3 516 L436.5 534 L438 545 L424 548 L419 532 L416.700 516Z" fill="#859fab" opacity=".75" filter="url(#bl3)"/>
<path d="M651.0 497.6 L686.0 485.3 L685.4 488.5 L651.0 499.9 Z" fill="#7b96a2" clip-path="url(#mc)"/>
<path d="M651.0 510.5 L682.7 502.0 L682.1 505.2 L651.0 512.8 Z" fill="#7b96a2" clip-path="url(#mc)"/>
<path d="M651.0 523.2 L679.4 515.7 L678.8 518.9 L651.0 525.5 Z" fill="#7b96a2" clip-path="url(#mc)"/>
<path d="M651.5 536.1 L677.0 528.0 L676.4 531.2 L651.5 538.4 Z" fill="#7b96a2" clip-path="url(#mc)"/>
<path d="M652.0 548.3 L676.0 540.5 L675.4 543.7 L652.0 550.6 Z" fill="#7b96a2" clip-path="url(#mc)"/>
<path d="M652.0 560.3 L676.0 553.0 L675.4 556.2 L652.0 562.6 Z" fill="#7b96a2" clip-path="url(#mc)"/>
<path d="M650.0 571.2 L675.5 564.0 L674.9 567.2 L650.0 573.5 Z" fill="#7b96a2" clip-path="url(#mc)"/>
<path d="M655.0 585.1 L677.0 577.0 L676.4 580.2 L655.0 587.4 Z" fill="#7b96a2" clip-path="url(#mc)"/>
<path d="M661.0 598.7 L681.0 593.0 L680.4 596.2 L661.0 601.0 Z" fill="#7b96a2" clip-path="url(#mc)"/>
<path d="M664.0 611.1 L685.0 605.5 L684.4 608.7 L664.0 613.4 Z" fill="#7b96a2" clip-path="url(#mc)"/>
<path d="M667.0 623.3 L689.0 617.5 L688.4 620.7 L667.0 625.6 Z" fill="#7b96a2" clip-path="url(#mc)"/>
<path d="M670.0 634.1 L694.0 628.5 L693.4 631.7 L670.0 636.4 Z" fill="#7b96a2" clip-path="url(#mc)"/>
<path d="M640.0 633.0 L690.0 637.0 L730.0 650.0 L730.0 664.0 L640.0 640.8 Z" fill="#a3c1cd" clip-path="url(#mc)"/>
<path d="M433.0 396.8L693.0 468.4 M426.4 412.5L685.0 484.2 M438.3 440.6L651.0 497.6 M438.3 442.9L651.0 499.9 M651.0 497.6L651.0 499.9 M419.6 428.3L438.8 433.3 M438.8 433.3L438.3 442.9 M419.6 430.5L437.3 435.2 M651.0 497.6L686.0 485.3 M651.0 499.9L685.4 488.5 M435.4 452.7L651.0 510.5 M435.4 455.0L651.0 512.8 M651.0 510.5L651.0 512.8 M415.8 440.7L435.9 446.0 M435.9 446.0L435.4 455.0 M415.8 442.9L434.4 447.9 M651.0 510.5L682.7 502.0 M651.0 512.8L682.1 505.2 M433.4 464.9L651.0 523.2 M433.4 467.2L651.0 525.5 M651.0 523.2L651.0 525.5 M413.6 454.2L433.9 459.5 M433.9 459.5L433.4 467.2 M413.6 456.4L432.4 461.4 M651.0 523.2L679.4 515.7 M651.0 525.5L678.8 518.9 M432.0 477.3L651.5 536.1 M432.0 479.6L651.5 538.4 M651.5 536.1L651.5 538.4 M411.8 467.7L432.5 473.1 M432.5 473.1L432.0 479.6 M411.8 469.9L431.0 475.0 M651.5 536.1L677.0 528.0 M651.5 538.4L676.4 531.2 M431.6 489.2L652.0 548.3 M431.6 491.5L652.0 550.6 M652.0 548.3L652.0 550.6 M411.8 480.0L432.1 485.3 M432.1 485.3L431.6 491.5 M411.8 482.2L430.6 487.2 M652.0 548.3L676.0 540.5 M652.0 550.6L675.4 543.7 M435.4 502.2L652.0 560.3 M435.4 504.5L652.0 562.6 M652.0 560.3L652.0 562.6 M412.9 490.2L435.9 496.2 M435.9 496.2L435.4 504.5 M412.9 492.4L434.4 498.2 M652.0 560.3L676.0 553.0 M652.0 562.6L675.4 556.2 M437.0 514.1L650.0 571.2 M437.0 516.4L650.0 573.5 M650.0 571.2L650.0 573.5 M416.7 507.0L437.5 512.4 M437.5 512.4L437.0 516.4 M416.7 509.2L436.0 514.4 M650.0 571.2L675.5 564.0 M650.0 573.5L674.9 567.2 M438.0 526.9L655.0 585.1 M438.0 529.2L655.0 587.4 M655.0 585.1L655.0 587.4 M418.0 519.0L438.5 524.4 M438.5 524.4L438.0 529.2 M418.0 521.2L437.0 526.3 M655.0 585.1L677.0 577.0 M655.0 587.4L676.4 580.2 M440.0 539.4L661.0 598.7 M440.0 541.7L661.0 601.0 M661.0 598.7L661.0 601.0 M419.5 531.0L440.5 536.5 M440.5 536.5L440.0 541.7 M419.5 533.2L439.0 538.4 M661.0 598.7L681.0 593.0 M661.0 601.0L680.4 596.2 M444.0 552.1L664.0 611.1 M444.0 554.4L664.0 613.4 M664.0 611.1L664.0 613.4 M424.6 544.8L444.5 550.0 M444.5 550.0L444.0 554.4 M424.6 547.0L443.0 551.9 M664.0 611.1L685.0 605.5 M664.0 613.4L684.4 608.7 M447.5 564.5L667.0 623.3 M447.5 566.8L667.0 625.6 M667.0 623.3L667.0 625.6 M429.0 553.8L448.0 558.8 M448.0 558.8L447.5 566.8 M429.0 556.0L446.5 560.7 M667.0 623.3L689.0 617.5 M667.0 625.6L688.4 620.7 M452.5 575.8L670.0 634.1 M452.5 578.1L670.0 636.4 M670.0 634.1L670.0 636.4 M434.8 562.8L453.0 567.5 M453.0 567.5L452.5 578.1 M434.8 565.0L451.5 569.5 M670.0 634.1L694.0 628.5 M670.0 636.4L693.4 631.7 M480.0 588.0L700.0 647.0 M480.0 590.0L700.0 649.0 M505.5 601.0L712.0 656.3 M640.0 633.0L690.0 637.0 M690.0 637.0L730.0 650.0 M436.2 376.8L458.0 382.6 M435.2 379.4L457.0 384.6 M443.5 364.7L464.8 370.0 M442.5 367.6L464.3 373.0 M450.3 353.6L471.6 358.9 M449.8 356.0L470.6 361.3 M458.0 343.9L478.8 348.7 M457.0 346.3L478.4 351.2 M465.3 335.7L486.1 340.5 M463.8 338.1L485.1 342.9 M472.0 328.9L491.9 333.2 M470.6 331.3L491.4 335.7 M457.0 384.6L463.4 373.4 M463.4 373.4L468.2 363.7 M470.6 361.3L475.5 355.0 M478.4 351.2L483.2 345.3 M485.1 342.9L490.0 338.6 M491.4 335.7L499.5 333.3 M500.0 333.3L501.5 327.0 M501.5 327.0L508.2 324.5 M508.2 324.5L508.7 321.1 M508.7 321.1L515.5 322.0 M515.5 322.0L516.0 317.8 M516.0 317.8L522.8 314.4 M522.8 314.4L524.0 312.5 M551.8 302.3L657.0 331.8 M657.0 331.8L669.9 356.8 M552.3 304.3L654.4 333.3 M654.4 333.3L666.7 357.4 M666.7 357.4L669.9 356.8 M543.0 304.0L649.0 333.8 M649.0 333.8L661.0 357.4 M543.5 306.0L646.4 335.3 M646.4 335.3L657.8 358.0 M657.8 358.0L661.0 357.4 M532.0 305.0L641.5 337.2 M641.5 337.2L653.0 359.5 M532.5 307.0L638.9 338.7 M638.9 338.7L649.8 360.1 M649.8 360.1L653.0 359.5 M524.0 308.5L633.4 341.2 M633.4 341.2L645.5 362.2 M524.5 310.5L630.8 342.7 M630.8 342.7L642.3 362.8 M642.3 362.8L645.5 362.2 M516.0 317.8L581.5 334.2 M581.5 334.2L591.6 351.8 M516.5 319.8L578.9 335.7 M578.9 335.7L588.4 352.4 M588.4 352.4L591.6 351.8 M508.7 321.1L573.4 338.2 M573.4 338.2L582.8 354.5 M509.2 323.1L570.8 339.7 M570.8 339.7L579.6 355.1 M579.6 355.1L582.8 354.5 M501.5 327.0L565.3 343.0 M565.3 343.0L573.5 356.5 M502.0 329.0L562.7 344.5 M562.7 344.5L570.3 357.1 M570.3 357.1L573.5 356.5 M499.5 333.3L604.4 362.0 M604.4 362.0L615.0 382.4 M500.0 335.3L601.8 363.5 M601.8 363.5L611.8 383.0 M611.8 383.0L615.0 382.4 M490.0 338.6L597.0 368.5 M597.0 368.5L607.0 387.5 M490.5 340.6L594.4 370.0 M594.4 370.0L603.8 388.1 M603.8 388.1L607.0 387.5 M483.2 345.3L589.6 375.2 M589.6 375.2L598.5 392.5 M483.7 347.3L587.0 376.7 M587.0 376.7L595.3 393.1 M595.3 393.1L598.5 392.5 M475.5 355.0L581.5 382.8 M581.5 382.8L590.0 397.5 M476.0 357.0L578.9 384.3 M578.9 384.3L586.8 398.1 M586.8 398.1L590.0 397.5 M590.8 348.0L640.8 362.2 M640.8 362.2L645.5 362.2 M670.5 356.8L789.5 389.2 M569.0 356.0L573.5 356.5 M583.0 354.5L591.6 351.8 M586.0 397.0L590.0 397.5 M468.2 363.7L673.4 418.4 M673.4 418.4L700.8 453.8 M468.5 366.0L670.2 420.2 M670.2 420.2L697.0 456.5 M463.4 373.4L666.0 427.4 M666.0 427.4L695.0 467.3 M463.8 375.6L663.0 429.4 M663.0 429.4L691.5 469.5 M673.4 418.4L670.2 420.2 M666.0 427.4L663.0 429.4 M572.0 302.8L767.2 358.4 M767.2 358.4L791.5 390.8 M771.2 355.3L801.6 391.8 M559.6 301.3L700.0 338.5 M517.0 303.7L524.0 305.8 M508.7 305.7L524.0 310.0 M503.0 308.0L522.8 314.0 M785.4 370.5L787.0 373.0 M787.0 373.0L820.0 382.5 M820.0 382.5L812.0 398.0 M823.0 380.7L814.5 397.0 M829.0 390.2L822.0 405.0 M833.7 400.5L829.0 413.0 M837.7 409.5L834.0 421.0 M841.0 418.0L838.5 430.0 M843.8 429.0L842.0 440.0" stroke="#10171b" stroke-width="1" fill="none" clip-path="url(#mc)" shape-rendering="crispEdges"/>
<g transform="translate(763.9 518.7) rotate(14.48)">
<ellipse rx="80.8" ry="131.1" fill="#5d7884" stroke="#27343b" stroke-width="1"/>
<ellipse cx="0.4" rx="77.3" ry="127.4" fill="url(#mi)" stroke="#27343b" stroke-width=".9" transform="rotate(0)"/>
</g>
</svg>
<!-- MODEL-END -->

</body>
</html>
